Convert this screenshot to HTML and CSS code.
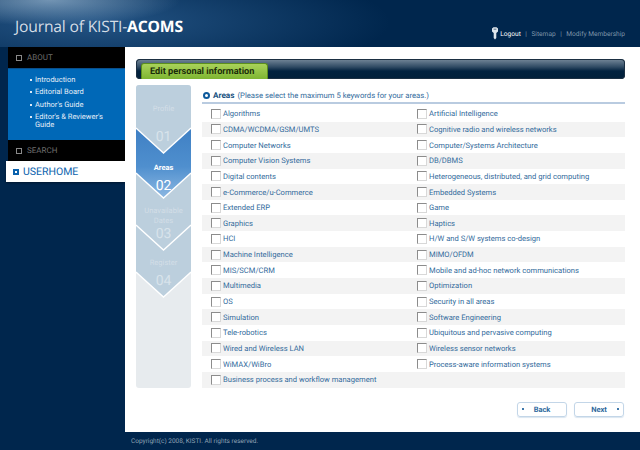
FILE: index.html

```html
<!DOCTYPE html>
<html lang="en">
<head>
    <meta charset="UTF-8">
    <title>Journal of KISTI-ACOMS</title>
    <link rel="stylesheet" href="styles.css">
</head>
<body>
<header class="top">
    <div class="logo">Journal of KISTI-<b>ACOMS</b></div>
    <div class="top-links">
        <svg class="key" width="8" height="13" viewBox="0 0 8 13"><path d="M1 1.5 L2.5 0.3 H5.5 L7 1.5 V4.5 L5.3 6 V11 L4 12.6 L2.7 11 V6 L1 4.5 Z" fill="#dfe6ec"/><rect x="2.6" y="1.6" width="2.8" height="1.2" fill="#6d8296"/></svg>
        <a class="on">Logout</a><i>|</i><a>Sitemap</a><i>|</i><a>Modify Membership</a>
    </div>
</header>
<div class="middle">
    <nav class="side">
        <div class="side-head"><span class="sq"></span>ABOUT</div>
        <ul class="side-menu">
            <li>Introduction</li>
            <li>Editorial Board</li>
            <li>Author's Guide</li>
            <li>Editor's &amp; Reviewer's<br>Guide</li>
        </ul>
        <div class="side-head"><span class="sq"></span>SEARCH</div>
        <div class="side-home"><span class="sq"></span>USERHOME</div>
    </nav>
    <main class="content">
        <div class="title-bar"><h1 class="tab">Edit personal information</h1></div>
        <div class="columns">
            <svg class="steps" width="55" height="303" viewBox="0 0 55 303">
                <defs>
                    <linearGradient id="blue" x1="0" y1="0" x2="0" y2="1">
                        <stop offset="0" stop-color="#3f80c4"/>
                        <stop offset="0.55" stop-color="#4f8fce"/>
                        <stop offset="1" stop-color="#8db8e2"/>
                    </linearGradient>
                </defs>
                <rect width="55" height="303" rx="3" fill="#e7ebee"/>
                <!-- drawn bottom step first, each one covers the notch of the next -->
                <path d="M0 100 H55 V187 L27.5 212 L0 187 Z" fill="#bccfdd"/>
                <polyline points="0,187 27.5,212 55,187" fill="none" stroke="#fff" stroke-width="1.3"/>
                <path d="M0 80 H55 V140 L27.5 165 L0 140 Z" fill="#bccfdd"/>
                <polyline points="0,140 27.5,165 55,140" fill="none" stroke="#fff" stroke-width="1.3"/>
                <path d="M0 43 H55 V88 L27.5 113 L0 88 Z" fill="url(#blue)"/>
                <polyline points="0,88 27.5,113 55,88" fill="none" stroke="#fff" stroke-width="1.3"/>
                <path d="M0 3 Q0 0 3 0 H52 Q55 0 55 3 V43 L27.5 68 L0 43 Z" fill="#bccfdd"/>
                <polyline points="0,43 27.5,68 55,43" fill="none" stroke="#fff" stroke-width="1.3"/>
                <text class="step-label" x="27.5" y="26">Profile</text>
                <text class="step-num" x="27.5" y="56">01</text>
                <text class="step-label active" x="27.5" y="85">Areas</text>
                <text class="step-num active" x="27.5" y="105">02</text>
                <text class="step-label" x="27.5" y="128">Unavailable</text>
                <text class="step-label" x="27.5" y="138">Dates</text>
                <text class="step-num" x="27.5" y="153">03</text>
                <text class="step-label" x="27.5" y="180">Register</text>
                <text class="step-num" x="27.5" y="200">04</text>
            </svg>
            <div class="areas">
                <h2 class="areas-head"><span class="ring"></span><b>Areas</b> (Please select the maximum 5 keywords for your areas.)</h2>
                <div class="row"><label><input type="checkbox">Algorithms</label><label><input type="checkbox">Artificial Intelligence</label></div>
                <div class="row"><label><input type="checkbox">CDMA/WCDMA/GSM/UMTS</label><label><input type="checkbox">Cognitive radio and wireless networks</label></div>
                <div class="row"><label><input type="checkbox">Computer Networks</label><label><input type="checkbox">Computer/Systems Architecture</label></div>
                <div class="row"><label><input type="checkbox">Computer Vision Systems</label><label><input type="checkbox">DB/DBMS</label></div>
                <div class="row"><label><input type="checkbox">Digital contents</label><label><input type="checkbox">Heterogeneous, distributed, and grid computing</label></div>
                <div class="row"><label><input type="checkbox">e-Commerce/u-Commerce</label><label><input type="checkbox">Embedded Systems</label></div>
                <div class="row"><label><input type="checkbox">Extended ERP</label><label><input type="checkbox">Game</label></div>
                <div class="row"><label><input type="checkbox">Graphics</label><label><input type="checkbox">Haptics</label></div>
                <div class="row"><label><input type="checkbox">HCI</label><label><input type="checkbox">H/W and S/W systems co-design</label></div>
                <div class="row"><label><input type="checkbox">Machine Intelligence</label><label><input type="checkbox">MIMO/OFDM</label></div>
                <div class="row"><label><input type="checkbox">MIS/SCM/CRM</label><label><input type="checkbox">Mobile and ad-hoc network communications</label></div>
                <div class="row"><label><input type="checkbox">Multimedia</label><label><input type="checkbox">Optimization</label></div>
                <div class="row"><label><input type="checkbox">OS</label><label><input type="checkbox">Security in all areas</label></div>
                <div class="row"><label><input type="checkbox">Simulation</label><label><input type="checkbox">Software Engineering</label></div>
                <div class="row"><label><input type="checkbox">Tele-robotics</label><label><input type="checkbox">Ubiquitous and pervasive computing</label></div>
                <div class="row"><label><input type="checkbox">Wired and Wireless LAN</label><label><input type="checkbox">Wireless sensor networks</label></div>
                <div class="row"><label><input type="checkbox">WiMAX/WiBro</label><label><input type="checkbox">Process-aware information systems</label></div>
                <div class="row"><label><input type="checkbox">Business process and workflow management</label></div>
            </div>
        </div>
        <div class="buttons">
            <a class="btn back">Back</a>
            <a class="btn next">Next</a>
        </div>
    </main>
</div>
<footer class="bottom">Copyright(c) 2008, KISTI. All rights reserved.</footer>
</body>
</html>
```

FILE: styles.css

```css
html, body { margin: 0; padding: 0; }
body { width: 640px; height: 450px; overflow: hidden; background-color: #00264d; font-family: Roboto, Arial, sans-serif; font-size: 7.6px; text-rendering: geometricPrecision; }

/* header */
.top {
    height: 47px;
    display: flex;
    justify-content: space-between;
    background:
        radial-gradient(ellipse 130px 26px at 50px 0, rgba(190,215,235,0.55), rgba(190,215,235,0) 100%),
        radial-gradient(ellipse 300px 60px at 90px 22px, rgba(60,115,170,0.6), rgba(60,115,170,0) 100%),
        #00264d;
}
.logo { margin: 14px 0 0 15px; color: #d5dde5; font-family: "Open Sans", sans-serif; font-size: 15.7px; line-height: 24px; letter-spacing: -0.2px; }
.logo b { color: #fff; }
.top-links { display: flex; align-items: center; height: 13px; margin: 27px 15px 0 0; color: #7f95a9; font-size: 6.6px; }
.top-links .key { margin-right: 1px; }
.top-links .on { color: #fff; }
.top-links i { font-style: normal; margin: 0 4.5px; }

.middle { display: flex; height: 385px; }

/* left menu */
.side { width: 117px; margin-left: 8px; }
.side-head { height: 21px; display: flex; align-items: center; padding-left: 8px; background-color: #000; color: #6d6d6d; font-size: 8px; }
.sq { width: 4px; height: 4px; border: 1px solid #8a8a8a; margin-right: 5px; }
.side-menu { height: 72px; margin: 0; padding: 6.5px 6px 0 27px; box-sizing: border-box; list-style: none; background-color: #0068b7; border-top: 1px solid #0a4f8c; color: #e4eef7; font-size: 7.5px; line-height: 8px; }
.side-menu li { margin-bottom: 4.5px; position: relative; }
.side-menu li::before { content: ""; position: absolute; left: -5px; top: 3px; width: 2px; height: 2px; background-color: #dce9f5; }
.side-home { height: 21px; display: flex; align-items: center; margin-left: -2px; padding-left: 7px; background-color: #fff; color: #0b62ad; font-size: 10.5px; box-shadow: 0 1px 2px rgba(0,0,0,0.4); }
.side-home .sq { border: 2px solid #0b62ad; width: 2px; height: 2px; margin-right: 4px; }

/* content */
.content { width: 515px; background-color: #fff; }
.title-bar { height: 20px; margin: 12px 15px 0 11px; border-radius: 4px; background: linear-gradient(#76899a, #2f4a63 40%, #02223f 60%, #02203a); box-shadow: inset 0 0 0 1px #1b2f42; display: flex; align-items: flex-end; }
.tab { width: 127px; height: 16px; box-sizing: border-box; margin: 0 0 0 5px; padding-left: 8px; border: 1px solid #5c8f1d; border-bottom: none; border-radius: 3px 3px 0 0; background: linear-gradient(#a9d25a, #7eb532); color: #1b2d0a; font-size: 9.2px; font-weight: bold; line-height: 15px; white-space: nowrap; }
.columns { display: flex; margin: 6px 15px 0 11px; }
.steps { display: block; flex: none; }
.step-label { fill: #d3dee7; font-size: 7.5px; text-anchor: middle; }
.step-num { fill: #d8e3eb; font-size: 14px; text-anchor: middle; }
.step-label.active { fill: #fff; font-weight: bold; }
.step-num.active { fill: #fff; }

.areas { flex: 1; height: 303px; box-sizing: border-box; margin-left: 11px; color: #336b9c; border-bottom: 1px solid #dde3ea; }
.areas-head { display: flex; align-items: center; gap: 3px; height: 19px; box-sizing: border-box; margin: 0 0 2px; padding-top: 4px; font-size: 7.7px; font-weight: normal; color: #336b9c; border-bottom: 2px solid #b9cbe0; white-space: nowrap; }
.areas-head b { color: #20527f; font-size: 8.2px; }
.ring { width: 3px; height: 3px; border: 2px solid #0d5a9c; border-radius: 50%; margin-left: 1px; }
.row { height: 15.65px; display: grid; grid-template-columns: 206px 1fr; padding-left: 9px; align-items: center; white-space: nowrap; }
.row:nth-of-type(even) { background-color: #f3f3f3; }
.row label { display: flex; align-items: center; }
.row input { appearance: none; width: 10px; height: 10px; margin: 0 2px 0 0; border: 1px solid #8c8c8c; border-right-color: #d8d8d8; border-bottom-color: #d8d8d8; background-color: #fff; box-sizing: border-box; }

.buttons { display: flex; justify-content: flex-end; gap: 7px; margin: 14px 16px 0 0; }
.btn { width: 50px; height: 15px; box-sizing: border-box; display: flex; align-items: center; justify-content: center; border: 1px solid #c3d6e8; border-radius: 3px; color: #2f6a9e; font-weight: bold; font-size: 7.5px; position: relative; box-shadow: 0 1px 1px #dbe6f0; }
.btn::before { content: ""; position: absolute; top: 5px; width: 2px; height: 2px; background-color: #3f78ab; }
.back::before { left: 4px; }
.next::before { right: 4px; }

.bottom { height: 18px; padding-left: 131px; color: #8fa2b4; font-size: 6.5px; line-height: 18px; }
```
